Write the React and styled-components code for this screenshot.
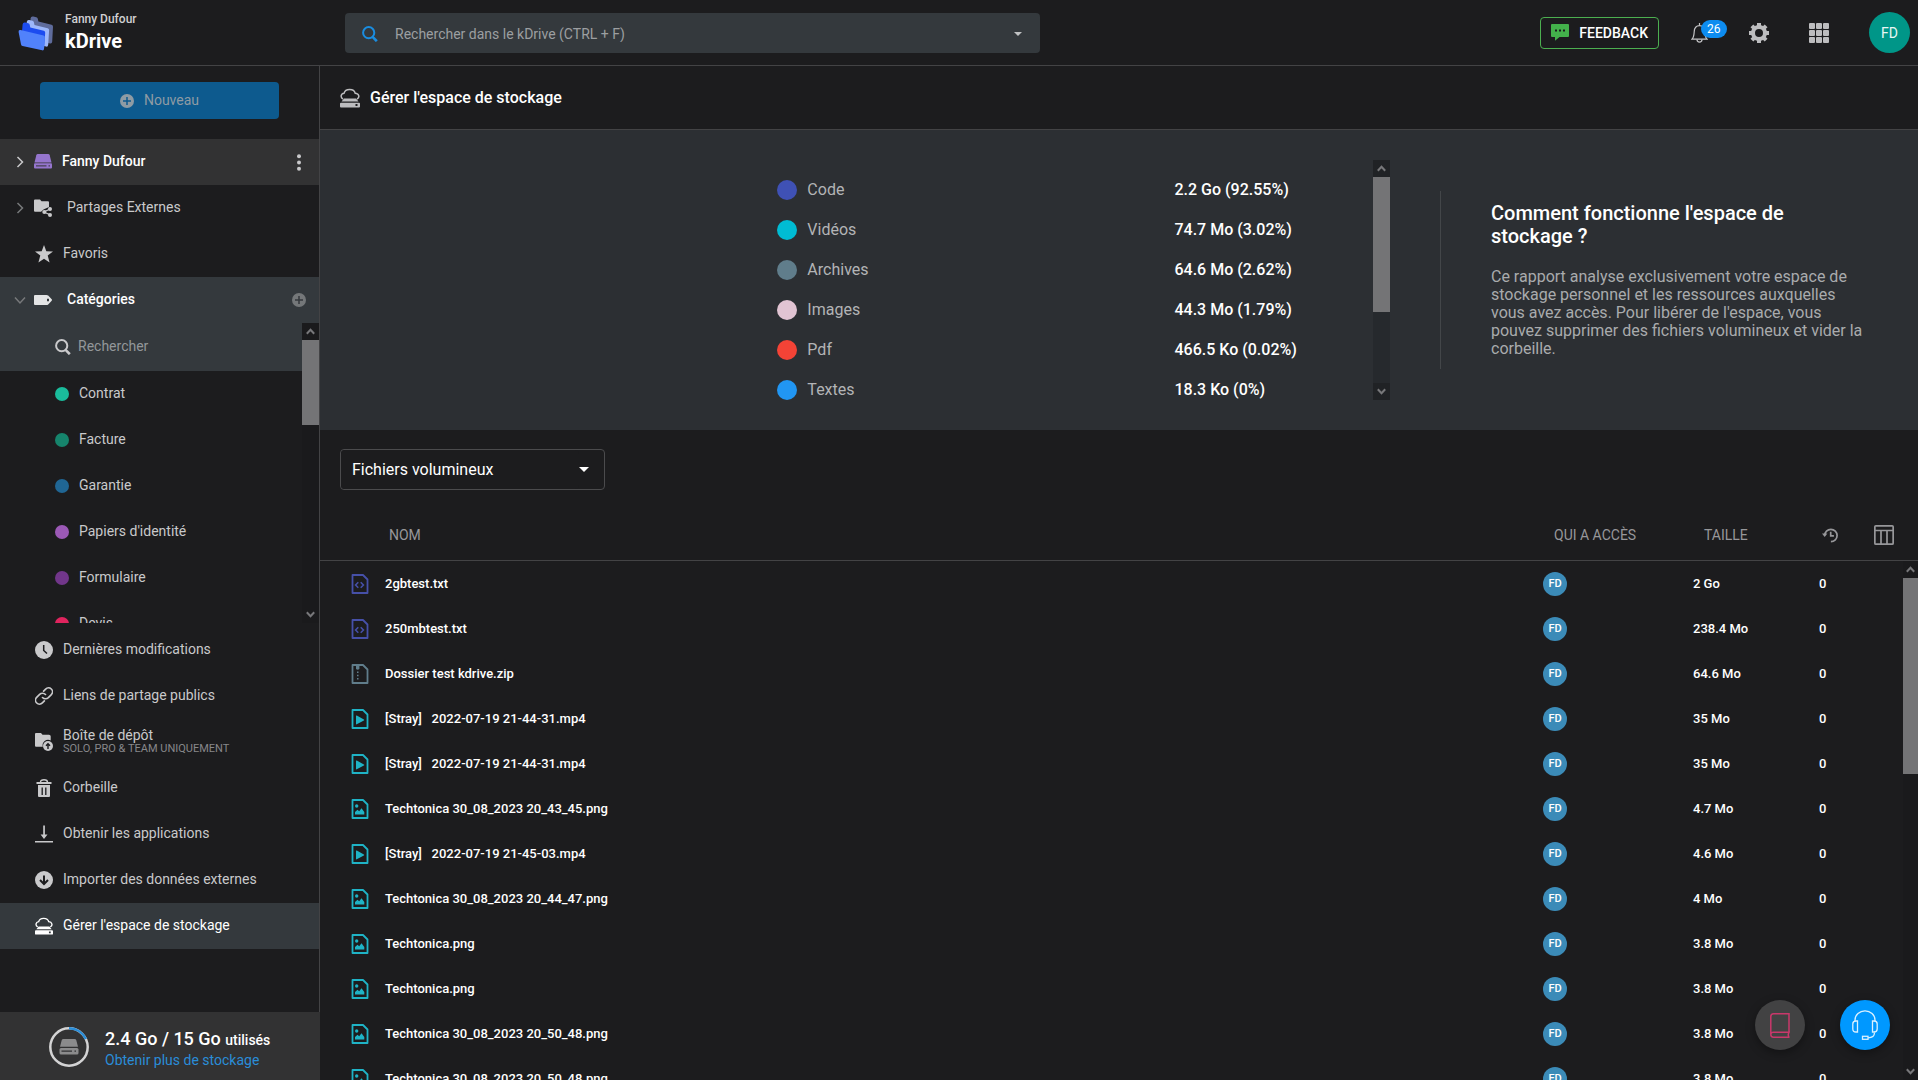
import React from 'react';
import styled, { createGlobalStyle, css } from 'styled-components';

const GlobalStyle = createGlobalStyle`
  * {
    box-sizing: border-box;
  }
  html, body {
    margin: 0;
    background: #1c1c1e;
  }
  body, button, input, select {
    font-family: Roboto, 'Liberation Sans', sans-serif;
  }
  button {
    cursor: pointer;
    border: 0;
    padding: 0;
    background: none;
    color: inherit;
  }
  svg {
    display: block;
    flex: none;
  }
`

const Page = styled.div`
  height: 100vh;
  display: flex;
  flex-direction: column;
  overflow: hidden;
  color: #fff;
  font-size: 14px;
  line-height: 16px;
`

const Body = styled.div`
  flex: 1;
  min-height: 0;
  display: flex;
`

/* ---------- header ---------- */

const Header = styled.header`
  flex: none;
  height: 66px;
  display: flex;
  align-items: center;
  border-bottom: 1px solid #434345;
`

const Brand = styled.a`
  width: 345px;
  flex: none;
  display: flex;
  align-items: center;
  gap: 11px;
  padding: 1px 0 0 18px;
  color: #fff;
  text-decoration: none;
`

const BrandUser = styled.div`
  margin-bottom: 1px;
  font-size: 12px;
  font-weight: 500;
  line-height: 14px;
  color: #d0d0d2;
`

const BrandName = styled.div`
  font-size: 20px;
  font-weight: 700;
  line-height: 28px;
`

const SearchForm = styled.form`
  flex: 0 1 695px;
  height: 40px;
  display: flex;
  align-items: center;
  padding: 2px 14px 0 17px;
  border-radius: 4px;
  background: #34393d;
`

const SearchInput = styled.input`
  flex: 1;
  min-width: 0;
  margin-left: 17px;
  padding: 0;
  border: 0;
  outline: 0;
  background: none;
  color: #fff;
  font-size: 14px;
  &::placeholder {
    color: #9c9fa1;
    opacity: 1;
  }
`

const HeaderActions = styled.div`
  margin-left: auto;
  display: flex;
  align-items: center;
  padding-right: 8px;
`

const FeedbackButton = styled.button`
  height: 32px;
  display: flex;
  align-items: center;
  gap: 10px;
  padding: 0 10px;
  border: 1px solid #4caf50;
  border-radius: 4px;
  font-size: 14px;
  font-weight: 500;
  color: #fff;
`

const BellButton = styled.button`
  position: relative;
  margin: 0 1px 0 32px;
`

const Badge = styled.span`
  position: absolute;
  left: 10px;
  top: -3px;
  height: 18px;
  padding: 0 6px;
  border-radius: 9px;
  background: #0d8cf0;
  color: #fff;
  font-size: 12px;
  line-height: 18px;
`

const IconButton = styled.button`
  margin-left: 40px;
  color: #bdbdbf;
`

const UserAvatar = styled.button`
  width: 41px;
  height: 41px;
  margin-left: 40px;
  border-radius: 50%;
  background: #009688;
  font-size: 14px;
  color: #e8f6f4;
`

/* ---------- sidebar ---------- */

const Sidebar = styled.aside`
  flex: none;
  width: 320px;
  display: flex;
  flex-direction: column;
`

const SidebarNav = styled.nav`
  flex: 1;
  min-height: 0;
  border-right: 1px solid #434345;
`

const NewButtonArea = styled.div`
  padding: 16px 40px 20px;
`

const NewButton = styled.button`
  width: 100%;
  height: 37px;
  display: flex;
  align-items: center;
  justify-content: center;
  gap: 10px;
  border-radius: 4px;
  background: #0d5a8e;
  color: #8e9ba4;
  font-size: 14px;
`

const NavRow = styled.div`
  height: 46px;
  display: flex;
  align-items: center;
  padding: 0 12px 0 14px;
  color: ${p => (p.$active ? '#fff' : '#c9c9cb')};
  background: ${p => p.$bg || 'transparent'};
`

const Chevron = styled.button`
  width: 20px;
  flex: none;
  color: ${p => (p.$bright ? '#c9c9cb' : '#77797b')};
`

const NavLink = styled.a`
  flex: 1;
  display: flex;
  align-items: center;
  gap: ${p => p.$gap || 10}px;
  color: inherit;
  text-decoration: none;
  font-weight: ${p => (p.$strong ? 500 : 400)};
  ${p => p.$leaf && css`
    padding-left: 21px;
  `}
`

const NavText = styled.span`
  padding-bottom: 2px;
`

const NavHint = styled.small`
  display: block;
  font-size: 11px;
  line-height: 12px;
  color: #87878a;
`

const RowButton = styled.button`
  width: 16px;
  display: flex;
  justify-content: center;
  color: ${p => p.$color};
`

const CategoryScroller = styled.div`
  display: flex;
  height: 300px;
  margin-bottom: 4px;
`

const CategoryList = styled.div`
  flex: 1;
  overflow: hidden;
`

const CategorySearch = styled.label`
  height: 48px;
  display: flex;
  align-items: center;
  gap: 7px;
  padding-left: 55px;
  background: #34393d;
  color: #c9c9cb;
  input {
    width: 160px;
    padding: 0 0 2px;
    border: 0;
    outline: 0;
    background: none;
    color: #fff;
    font-size: 14px;
  }
  input::placeholder {
    color: #93979a;
    opacity: 1;
  }
`

const Category = styled.a`
  height: 46px;
  display: flex;
  align-items: center;
  gap: 10px;
  padding-left: 55px;
  color: #c9c9cb;
  text-decoration: none;
`

const Dot = styled.span`
  flex: none;
  width: ${p => p.$size}px;
  height: ${p => p.$size}px;
  border-radius: 50%;
  background: ${p => p.$color};
`

const Quota = styled.div`
  flex: none;
  height: 68px;
  display: flex;
  align-items: center;
  gap: 16px;
  padding: 2px 0 0 49px;
  background: #323233;
`

const QuotaText = styled.div`
  padding-top: 2px;
  font-size: 18px;
  font-weight: 500;
  line-height: 22px;
  small {
    font-size: 14px;
  }
`

const QuotaLink = styled.a`
  font-size: 14px;
  line-height: 18px;
  color: #2a8dd8;
  text-decoration: none;
`

/* ---------- scroll bar ---------- */

const ScrollTrack = styled.div`
  flex: ${p => (p.$fill ? 1 : 'none')};
  min-height: 0;
  width: ${p => p.$width || 17}px;
  display: flex;
  flex-direction: column;
  background: ${p => p.$track || '#1a1a1c'};
`

const ScrollButton = styled.button`
  height: 17px;
  flex: none;
  display: flex;
  align-items: center;
  justify-content: center;
  background: ${p => p.$bg || '#1a1a1c'};
  color: #77777a;
`

const ScrollThumb = styled.div`
  height: ${p => p.$height}px;
  background: #747476;
`

const ScrollEnd = styled(ScrollButton)`
  margin-top: auto;
`

const ScrollBar = ({ thumb, ...rest }) => (
  <ScrollTrack {...rest}>
    <ScrollButton $bg={rest.$button} type="button" aria-label="Défiler vers le haut">
      <svg width="9" height="7" viewBox="0 0 9 7" fill="none" stroke="currentColor" strokeWidth="2"><path d="M.8 5.8 4.5 1.8l3.7 4" /></svg>
    </ScrollButton>
    <ScrollThumb $height={thumb} />
    <ScrollEnd $bg={rest.$button} type="button" aria-label="Défiler vers le bas">
      <svg width="9" height="7" viewBox="0 0 9 7" fill="none" stroke="currentColor" strokeWidth="2"><path d="M.8 1.2 4.5 5.2l3.7-4" /></svg>
    </ScrollEnd>
  </ScrollTrack>
)

/* ---------- main ---------- */

const Main = styled.main`
  flex: 1;
  min-width: 0;
  display: flex;
  flex-direction: column;
`

const TitleBar = styled.div`
  flex: none;
  height: 64px;
  display: flex;
  align-items: center;
  gap: 10px;
  padding-left: 20px;
  border-bottom: 1px solid #434345;
  color: #bdbdbf;
`

const Title = styled.h1`
  margin: 0;
  font-size: 16px;
  font-weight: 500;
  line-height: 20px;
  color: #fff;
`

const StoragePanel = styled.section`
  flex: none;
  height: 300px;
  display: flex;
  align-items: center;
  background: #2c2f33;
`

const Usage = styled.div`
  flex: 7;
  height: 240px;
  display: grid;
  grid-template-columns: 43fr 56fr 17px;
  padding-right: 50px;
`

const UsageList = styled.dl`
  grid-column: 2;
  margin: 0;
  padding-top: 10px;
  overflow: hidden;
  font-size: 16px;
  line-height: 18px;
`

const UsageRow = styled.div`
  height: 40px;
  display: grid;
  grid-template-columns: 2fr 1fr;
  align-items: center;
  dt {
    display: flex;
    align-items: center;
    gap: 10px;
    color: #b3b4b6;
  }
  dd {
    margin: 0;
    font-weight: 500;
  }
`

const Help = styled.div`
  flex: 0 0 478px;
  height: 178px;
  display: flex;
  flex-direction: column;
  justify-content: center;
  padding: 0 50px;
  border-left: 1px solid #434649;
  h2 {
    margin: 0 0 20px;
    font-size: 20px;
    font-weight: 500;
    line-height: 23px;
  }
  p {
    margin: 0;
    font-size: 16px;
    line-height: 18px;
    color: #a9abad;
  }
`

const Toolbar = styled.div`
  flex: none;
  height: 80px;
  padding: 19px 20px;
`

const SelectBox = styled.label`
  width: 265px;
  height: 41px;
  display: flex;
  align-items: center;
  padding-right: 15px;
  border: 1px solid #4b4b4d;
  border-radius: 4px;
  select {
    flex: 1;
    height: 100%;
    padding: 0 11px;
    border: 0;
    outline: 0;
    appearance: none;
    background: #1c1c1e;
    color: #fff;
    font-size: 16px;
    border-radius: 4px;
  }
`

const TableArea = styled.div`
  flex: 1;
  min-height: 0;
  display: flex;
  overflow: hidden;
`

const Table = styled.table`
  flex: 1;
  display: block;
  thead, tbody {
    display: block;
  }
`

const TableRow = styled.tr`
  height: 45px;
  display: grid;
  grid-template-columns: 34px 1fr 150px 126px 84px;
  align-items: center;
  padding-left: 31px;
  td {
    padding: 0;
    font-size: 13px;
    font-weight: 500;
    white-space: pre;
  }
`

const HeadRow = styled(TableRow)`
  height: 51px;
  border-bottom: 1px solid #434345;
  color: #97979a;
  th {
    padding: 0 0 0 11px;
    font-weight: 400;
    font-size: 14px;
    text-align: left;
  }
  th:nth-child(2) {
    padding-left: 4px;
  }
  th:last-child {
    display: flex;
    align-items: center;
    justify-content: space-between;
    padding: 0 9px 0 3px;
  }
`

const ScrollColumn = styled.div`
  width: 15px;
  flex: none;
  display: flex;
  flex-direction: column;
`

const ScrollHead = styled.div`
  flex: none;
  height: 51px;
  border-bottom: 1px solid #434345;
`

const AccessAvatar = styled.span`
  width: 24px;
  height: 24px;
  display: flex;
  align-items: center;
  justify-content: center;
  border-radius: 50%;
  background: #3b8bb8;
  font-size: 11px;
`

const FloatingActions = styled.div`
  position: fixed;
  right: 28px;
  bottom: 30px;
  display: flex;
  gap: 35px;
`

const RoundButton = styled.button`
  width: 50px;
  height: 50px;
  display: flex;
  align-items: center;
  justify-content: center;
  border-radius: 50%;
  background: ${p => p.$bg};
  color: ${p => p.$color};
  box-shadow: 0 3px 10px rgba(0, 0, 0, 0.35);
`

/* ---------- icons ---------- */

const Logo = () => (
  <svg width="36" height="35" viewBox="18 16 36 35">
    <path d="M30.500 18.500q.4-2.500 2.800-2l3 .7q1.200.3 1.500 1.600l.6 2.700 13.200 3.300q1.500.4 1.400 2l-.8 15q-.2 2-2 1.700L31 40z" fill="#5f6c9c" />
    <path d="M26.700 22q.4-2.600 2.700-2l3 .8q1.200.3 1.500 1.500l.6 2.600 13.200 3.400q1.500.4 1.400 2l-.9 14.500q-.2 2.200-2 1.800L28 43z" fill="#9db7fa" />
    <path d="M22.600 24.500q.3-2.500 2.600-2l3 .8q1.200.3 1.500 1.500l.6 2.600 13.500 3.400q1.500.4 1.400 2L44 49 21 44z" fill="#1c4cf0" />
    <path d="M18.600 32q-.3-2.500 2-2l23 5.500q1.400.4 1.300 2l-.9 11.500q-.2 1.700-1.800 1.300L22.500 46q-1.300-.3-1.500-1.700z" fill="#5182fb" />
  </svg>
)

const SearchIcon = ({ size = 16 }) => (
  <svg width={size} height={size} viewBox="0 0 16 16" fill="none" stroke="currentColor" strokeWidth="2">
    <circle cx="6.700" cy="6.700" r="5.600" />
    <path d="m10.600 10.800 4.200 4.400" strokeWidth="2.600" />
  </svg>
)

const Caret = ({ width = 10 }) => (
  <svg width={width} height={width / 2} viewBox="0 0 10 5" fill="currentColor"><path d="M0 0h10L5 5z" /></svg>
)

const ChatIcon = () => (
  <svg width="18" height="17" viewBox="0 0 18 17">
    <path d="M1 0h16q1 0 1 1v11q0 1-1 1H8.500L4 16.800V13H1q-1 0-1-1V1q0-1 1-1z" fill="#43b14b" />
    <path d="M4 5.500h2v2H4zm4 0h2v2H8zm4 0h2v2h-2z" fill="#1c1c1e" />
  </svg>
)

const BellIcon = () => (
  <svg width="17" height="20" viewBox="0 0 17 20" fill="none" stroke="#c4c4c6" strokeWidth="1.200">
    <path d="M8.500 0v2.500M1 16.200h15c-2-2-2-4-2.200-7.500C13.600 5 11.500 2.600 8.500 2.600S3.400 5 3.200 8.700C3 12.200 3 14.200 1 16.200z" />
    <path d="M6 16.500c0 3.400 5 3.400 5 0" />
  </svg>
)

const GearIcon = () => (
  <svg width="20" height="20" viewBox="0 0 20 20" fill="none" stroke="currentColor">
    <circle cx="10" cy="10" r="6" strokeWidth="4" />
    <g strokeWidth="4">
      <path d="M10 0v4M10 16v4M0 10h4M16 10h4M2.900 2.900l2.800 2.800M14.300 14.300l2.800 2.800M2.900 17.100l2.800-2.800M14.300 5.700l2.800-2.800" />
    </g>
  </svg>
)

const GridIcon = () => (
  <svg width="20" height="20" viewBox="0 0 20 20" fill="currentColor">
    {[0, 7, 14].map(y => [0, 7, 14].map(x => (
      <rect key={`${x}-${y}`} x={x} y={y} width="6" height="6" rx="1" />
    )))}
  </svg>
)

const PlusCircle = ({ cross }) => (
  <svg width="14" height="14" viewBox="0 0 14 14">
    <circle cx="7" cy="7" r="7" fill="currentColor" />
    <path d="M7 3v8M3 7h8" stroke={cross} strokeWidth="1.500" />
  </svg>
)

const ChevronRight = () => (
  <svg width="12" height="12" viewBox="0 0 12 12" fill="none" stroke="currentColor" strokeWidth="1.500"><path d="m3.500 1 5 5-5 5" /></svg>
)

const ChevronDown = () => (
  <svg width="12" height="12" viewBox="0 0 12 12" fill="none" stroke="currentColor" strokeWidth="1.500"><path d="m1 3.500 5 5.500 5-5.500" /></svg>
)

const DriveIcon = ({ color, line, size = 18 }) => (
  <svg width={size} height={size} viewBox="0 0 18 18">
    <path d="M3.800 1h10.400q1.200 0 1.500 1.200L17.500 9.500H.5l1.800-7.300Q2.600 1 3.800 1z" fill={color} />
    <rect y="10.300" width="18" height="5.200" rx="1" fill={color} />
    <path d="M2 12.900h10.500M14.500 12.900H16" stroke={line} strokeWidth="1" />
  </svg>
)

const StorageIcon = ({ size }) => (
  <svg width={size} height={size} viewBox="0 0 20 20">
    <path d="M3 11C.2 9.500.6 5.700 4.100 5.200 5.200.3 14 .1 15.200 5.200c4 .3 4.800 4.300 1.800 5.800" fill="none" stroke="currentColor" strokeWidth="1.500" />
    <path d="M4 10.500h12l2.500 3h-17z" fill="currentColor" />
    <path d="M1 14.700h18q1 0 1 1v2.800q0 1-1 1H1q-1 0-1-1v-2.800q0-1 1-1zM15.500 16v2h2v-2z" fill="currentColor" fillRule="evenodd" />
  </svg>
)

const SharedFolderIcon = () => (
  <svg width="18" height="18" viewBox="0 0 18 18" fill="currentColor">
    <path d="M1 .5h5l1.500 1.700H14q1 0 1 1V8L9.500 10.500 7 12.800H1q-1 0-1-1V1.500q0-1 1-1z" />
    <path d="m16 10-6 3 6.500 3" fill="none" stroke="currentColor" strokeWidth="1.300" />
    <circle cx="16" cy="10" r="2" /><circle cx="10.300" cy="13" r="2" /><circle cx="16" cy="16" r="2" />
  </svg>
)

const StarIcon = () => (
  <svg width="18" height="18" viewBox="0 0 18 18" fill="currentColor"><path d="m9 0 2.300 6.300 6.700.2-5.300 4.100 1.900 6.900L9 13.800l-5.600 3.700 1.900-6.900L0 6.500l6.700-.2z" /></svg>
)

const TagIcon = () => (
  <svg width="18" height="18" viewBox="0 0 18 18" fill="#e3e4e5">
    <path d="M1 4h11.500q1 0 1.700.6l3.500 3.700q.6.700 0 1.400l-3.500 3.700q-.7.600-1.700.6H1q-1 0-1-1V5q0-1 1-1zM13 7.800v2.400h2V7.800z" fillRule="evenodd" />
  </svg>
)

const ClockIcon = () => (
  <svg width="18" height="18" viewBox="0 0 18 18"><circle cx="9" cy="9" r="9" fill="currentColor" /><path d="M8.700 4v5.500l3.300 3" fill="none" stroke="#1c1c1e" strokeWidth="1.500" /></svg>
)

const ChainIcon = () => (
  <svg width="18" height="18" viewBox="0 0 24 24" fill="none" stroke="currentColor" strokeWidth="2.200" strokeLinecap="round">
    <path d="M10 14a5.500 5.500 0 0 0 7.800.2l4-4a5.200 5.200 0 0 0-7.600-7.400L11.500 5.500" />
    <path d="M14 10a5.500 5.500 0 0 0-7.800-.2l-4 4a5.200 5.200 0 0 0 7.600 7.400l2.700-2.700" />
  </svg>
)

const DepositIcon = () => (
  <svg width="18" height="18" viewBox="0 0 18 18">
    <path d="M1 0h5l1.500 1.800H14q1.700 0 1.700 1.500v4.200a5.500 5.500 0 0 0-7.900 6.300H1q-1 0-1-1V1q0-1 1-1z" fill="currentColor" />
    <circle cx="13" cy="13" r="5" fill="currentColor" />
    <path d="M13 16v-5M11 12.800l2-2 2 2" fill="none" stroke="#1c1c1e" strokeWidth="1.400" />
  </svg>
)

const TrashIcon = () => (
  <svg width="18" height="18" viewBox="0 0 18 18">
    <path d="M1.500 3h15v2h-15zM3 6h12v11q0 1-1 1H4q-1 0-1-1z" fill="currentColor" />
    <path d="M5.500 3.200Q5.500.8 9 .8t3.500 2.400" fill="none" stroke="currentColor" strokeWidth="1.400" />
    <path d="M7.200 8.500V16M10.800 8.500V16" stroke="#1c1c1e" strokeWidth="1.300" />
  </svg>
)

const DownloadIcon = () => (
  <svg width="18" height="18" viewBox="0 0 18 18"><path d="M8.200.500h1.700v9h2.600L9 14 5.600 9.500h2.600zM0 16h18v1.500H0z" fill="currentColor" /></svg>
)

const ImportIcon = () => (
  <svg width="18" height="18" viewBox="0 0 18 18"><circle cx="9" cy="9" r="9" fill="currentColor" /><path d="M9 4.500v8M5 9l4 4 4-4" fill="none" stroke="#1c1c1e" strokeWidth="2" /></svg>
)

const MoreIcon = () => (
  <svg width="4" height="17" viewBox="0 0 4 17" fill="currentColor"><circle cx="2" cy="2.200" r="2" /><circle cx="2" cy="8.500" r="2" /><circle cx="2" cy="14.800" r="2" /></svg>
)

const HistoryIcon = () => (
  <svg width="16" height="15" viewBox="0 0 16 15" fill="none" stroke="currentColor" strokeWidth="1.700">
    <path d="M2.700 7.500a6.200 6.200 0 1 1 6.200 6.200M8.700 3.800v4h3.200" />
    <path d="M0 5.500h5.400L2.700 9z" fill="currentColor" stroke="none" />
  </svg>
)

const ColumnsIcon = () => (
  <svg width="20" height="20" viewBox="0 0 20 20" fill="none" stroke="currentColor" strokeWidth="1.700">
    <rect x=".85" y=".85" width="18.300" height="18.300" rx="1" />
    <path d="M1 5.500h18M7 6v13M13 6v13" />
  </svg>
)

const QuotaRing = () => (
  <svg width="40" height="40" viewBox="0 0 40 40" fill="none" strokeWidth="2.500">
    <circle cx="20" cy="20" r="18.700" stroke="#d3d3d4" />
    <path d="M20 1.300a18.700 18.700 0 0 1 16.900 10.700" stroke="#2a8dd8" />
    <g transform="translate(10.500 11)">
      <path d="M4 1h11q1.500 0 1.800 1.300l1.700 6.500H.5l1.700-6.500Q2.500 1 4 1z" fill="#8b8b8c" />
      <rect y="10" width="19" height="6.500" rx="1.500" fill="#8b8b8c" />
      <path d="M2 13.200h10.500M15 13.200h1.500" stroke="#323233" strokeWidth="1.200" />
    </g>
  </svg>
)

const fileKinds = {
  code: {
    color: '#4650a8',
    glyph: <path d="M7.300 8.300 4.600 11l2.700 2.700M9.700 8.300l2.700 2.700-2.700 2.700" fill="none" stroke="currentColor" strokeWidth="1.600" />,
  },
  zip: {
    color: '#607d8b',
    glyph: <path d="M5 1h3.400v4q-1.700 1.500-3.400 0zM6 7.500h1.500v1.600H6zm0 3.200h1.500v1.600H6zm0 3.200h1.500v1.600H6z" fill="currentColor" />,
  },
  video: {
    color: '#1fb3c6',
    glyph: <path d="M5 7q0-.8.800-.5l7.100 4q.8.500 0 1l-7.100 3.800q-.8.300-.8-.5z" fill="currentColor" />,
  },
  image: {
    color: '#1fb3c6',
    glyph: <path d="M4 15.500V13l2.500-2.200 1.700 1.400 2.300-3 2.800 3.800v2.500zM4 7a1.700 1.700 0 1 1 3.400 0A1.700 1.700 0 1 1 4 7z" fill="currentColor" />,
  },
}

const FileGlyph = styled.svg`
  color: ${p => p.$color};
`

const FileIcon = ({ kind }) => (
  <FileGlyph $color={fileKinds[kind].color} width="18" height="20" viewBox="0 0 18 20">
    <path d="M1.500 1H12l4.500 4.500V19h-15z" fill="none" stroke="currentColor" strokeWidth="1.800" strokeLinejoin="round" />
    {fileKinds[kind].glyph}
  </FileGlyph>
)

const BookIcon = () => (
  <svg width="20" height="25" viewBox="0 0 20 25" fill="none" stroke="currentColor" strokeWidth="1.500">
    <path d="M19 19.300V.8H3.500Q.8.800.8 3.500v18q0 2.700 2.700 2.700H19.500M.8 21.500q0-2.200 2.700-2.200H19q-1.500 2.400 0 4.900" />
  </svg>
)

const HeadsetIcon = () => (
  <svg width="26" height="30" viewBox="0 0 26 30" fill="none" stroke="currentColor" strokeWidth="1.300">
    <path d="M3 11v-.8C3 5 7.500.800 13 .800S23 5 23 10.200v.8M22.500 22.500c0 3.600-2 5.300-6.500 5.300" />
    <path d="M5.500 11v11H4Q.8 22 .8 19v-5q0-3 3.200-3zM20.500 11v11H22q3.200 0 3.200-3v-5q0-3-3.200-3z" />
    <rect x="10.500" y="26.300" width="5.500" height="3" />
  </svg>
)

/* ---------- data ---------- */

const categories = [
  ['Contrat', '#1abc9c'],
  ['Facture', '#16846c'],
  ['Garantie', '#206694'],
  ['Papiers d\'identité', '#9b59b6'],
  ['Formulaire', '#71368a'],
  ['Devis', '#e0245e'],
]

const links = [
  { label: 'Dernières modifications', icon: <ClockIcon /> },
  { label: 'Liens de partage publics', icon: <ChainIcon /> },
  { label: 'Boîte de dépôt', hint: 'SOLO, PRO & TEAM UNIQUEMENT', icon: <DepositIcon /> },
  { label: 'Corbeille', icon: <TrashIcon /> },
  { label: 'Obtenir les applications', icon: <DownloadIcon /> },
  { label: 'Importer des données externes', icon: <ImportIcon /> },
  { label: 'Gérer l\'espace de stockage', icon: <StorageIcon size={18} />, active: true },
]

const usage = [
  ['Code', '2.2 Go (92.55%)', '#3f51b5'],
  ['Vidéos', '74.7 Mo (3.02%)', '#00bcd4'],
  ['Archives', '64.6 Mo (2.62%)', '#607d8b'],
  ['Images', '44.3 Mo (1.79%)', '#e1c4d3'],
  ['Pdf', '466.5 Ko (0.02%)', '#f44336'],
  ['Textes', '18.3 Ko (0%)', '#2196f3'],
]

const files = [
  ['code', '2gbtest.txt', '2 Go'],
  ['code', '250mbtest.txt', '238.4 Mo'],
  ['zip', 'Dossier test kdrive.zip', '64.6 Mo'],
  ['video', '[Stray]   2022-07-19 21-44-31.mp4', '35 Mo'],
  ['video', '[Stray]   2022-07-19 21-44-31.mp4', '35 Mo'],
  ['image', 'Techtonica 30_08_2023 20_43_45.png', '4.7 Mo'],
  ['video', '[Stray]   2022-07-19 21-45-03.mp4', '4.6 Mo'],
  ['image', 'Techtonica 30_08_2023 20_44_47.png', '4 Mo'],
  ['image', 'Techtonica.png', '3.8 Mo'],
  ['image', 'Techtonica.png', '3.8 Mo'],
  ['image', 'Techtonica 30_08_2023 20_50_48.png', '3.8 Mo'],
  ['image', 'Techtonica 30_08_2023 20_50_48.png', '3.8 Mo'],
]

const SearchColor = styled.span`
  color: #1a8de0;
`

const SearchMore = styled.button`
  color: #c0c2c3;
  padding: 4px;
`

const TopBar = () => (
  <Header>
    <Brand href="#">
      <Logo />
      <div>
        <BrandUser>Fanny Dufour</BrandUser>
        <BrandName>kDrive</BrandName>
      </div>
    </Brand>
    <SearchForm role="search">
      <SearchColor><SearchIcon /></SearchColor>
      <SearchInput aria-label="Rechercher" placeholder="Rechercher dans le kDrive (CTRL + F)" />
      <SearchMore type="button" aria-label="Filtres"><Caret width={8} /></SearchMore>
    </SearchForm>
    <HeaderActions>
      <FeedbackButton type="button"><ChatIcon />FEEDBACK</FeedbackButton>
      <BellButton type="button" aria-label="Notifications"><BellIcon /><Badge>26</Badge></BellButton>
      <IconButton type="button" aria-label="Paramètres"><GearIcon /></IconButton>
      <IconButton type="button" aria-label="Applications"><GridIcon /></IconButton>
      <UserAvatar type="button">FD</UserAvatar>
    </HeaderActions>
  </Header>
)

const SideMenu = () => (
  <Sidebar>
    <SidebarNav>
      <NewButtonArea>
        <NewButton type="button"><PlusCircle cross="#0d5a8e" /><NavText>Nouveau</NavText></NewButton>
      </NewButtonArea>
      <NavRow $active $bg="#323233">
        <Chevron $bright type="button" aria-label="Ouvrir"><ChevronRight /></Chevron>
        <NavLink href="#" $strong><DriveIcon color="#9575cd" line="#323233" /><NavText>Fanny Dufour</NavText></NavLink>
        <RowButton $color="#c9c9cb" type="button" aria-label="Plus"><MoreIcon /></RowButton>
      </NavRow>
      <NavRow>
        <Chevron type="button" aria-label="Ouvrir"><ChevronRight /></Chevron>
        <NavLink href="#" $gap={15}><SharedFolderIcon /><NavText>Partages Externes</NavText></NavLink>
      </NavRow>
      <NavRow>
        <NavLink href="#" $leaf><StarIcon /><NavText>Favoris</NavText></NavLink>
      </NavRow>
      <NavRow $active $bg="#34393d">
        <Chevron type="button" aria-label="Fermer"><ChevronDown /></Chevron>
        <NavLink href="#" $strong $gap={15}><TagIcon /><NavText>Catégories</NavText></NavLink>
        <RowButton $color="#747779" type="button" aria-label="Ajouter"><PlusCircle cross="#34393d" /></RowButton>
      </NavRow>
      <CategoryScroller>
        <CategoryList>
          <CategorySearch>
            <SearchIcon />
            <input placeholder="Rechercher" aria-label="Rechercher une catégorie" />
          </CategorySearch>
          {categories.map(([name, color]) => (
            <Category href="#" key={name}><Dot $size={14} $color={color} /><NavText>{name}</NavText></Category>
          ))}
        </CategoryList>
        <ScrollBar thumb={85} />
      </CategoryScroller>
      {links.map(({ label, hint, icon, active }) => (
        <NavRow key={label} $active={active} $bg={active && '#34393d'}>
          <NavLink href="#" $leaf>
            {icon}
            <NavText>{label}{hint && <NavHint>{hint}</NavHint>}</NavText>
          </NavLink>
        </NavRow>
      ))}
    </SidebarNav>
    <Quota>
      <QuotaRing />
      <div>
        <QuotaText>2.4 Go / 15 Go <small>utilisés</small></QuotaText>
        <QuotaLink href="#">Obtenir plus de stockage</QuotaLink>
      </div>
    </Quota>
  </Sidebar>
)

const StorageReport = () => (
  <StoragePanel>
    <Usage>
      <UsageList>
        {usage.map(([label, value, color]) => (
          <UsageRow key={label}>
            <dt><Dot $size={20} $color={color} />{label}</dt>
            <dd>{value}</dd>
          </UsageRow>
        ))}
      </UsageList>
      <ScrollBar thumb={135} $track="#26292d" $button="#202225" />
    </Usage>
    <Help>
      <h2>Comment fonctionne l'espace de stockage ?</h2>
      <p>Ce rapport analyse exclusivement votre espace de stockage personnel et les ressources auxquelles vous avez accès. Pour libérer de l'espace, vous pouvez supprimer des fichiers volumineux et vider la corbeille.</p>
    </Help>
  </StoragePanel>
)

const FileTable = () => (
  <TableArea>
    <Table>
      <thead>
        <HeadRow>
          <th aria-label="Type" />
          <th>NOM</th>
          <th>QUI A ACCÈS</th>
          <th>TAILLE</th>
          <th>
            <button type="button" aria-label="Versions"><HistoryIcon /></button>
            <button type="button" aria-label="Colonnes"><ColumnsIcon /></button>
          </th>
        </HeadRow>
      </thead>
      <tbody>
        {files.map(([kind, name, size], i) => (
          <TableRow key={i}>
            <td><FileIcon kind={kind} /></td>
            <td>{name}</td>
            <td><AccessAvatar>FD</AccessAvatar></td>
            <td>{size}</td>
            <td>0</td>
          </TableRow>
        ))}
      </tbody>
    </Table>
    <ScrollColumn>
      <ScrollHead />
      <ScrollBar thumb={196} $width={15} $fill />
    </ScrollColumn>
  </TableArea>
)

export default function App() {
  return (
    <Page>
      <GlobalStyle />
      <TopBar />
      <Body>
        <SideMenu />
        <Main>
          <TitleBar>
            <StorageIcon size={20} />
            <Title>Gérer l'espace de stockage</Title>
          </TitleBar>
          <StorageReport />
          <Toolbar>
            <SelectBox>
              <select aria-label="Type de rapport">
                <option>Fichiers volumineux</option>
              </select>
              <Caret />
            </SelectBox>
          </Toolbar>
          <FileTable />
        </Main>
      </Body>
      <FloatingActions>
        <RoundButton type="button" $bg="#424243" $color="#c9386b" aria-label="Documentation"><BookIcon /></RoundButton>
        <RoundButton type="button" $bg="#0098ff" $color="#d9f0ff" aria-label="Support"><HeadsetIcon /></RoundButton>
      </FloatingActions>
    </Page>
  )
}
